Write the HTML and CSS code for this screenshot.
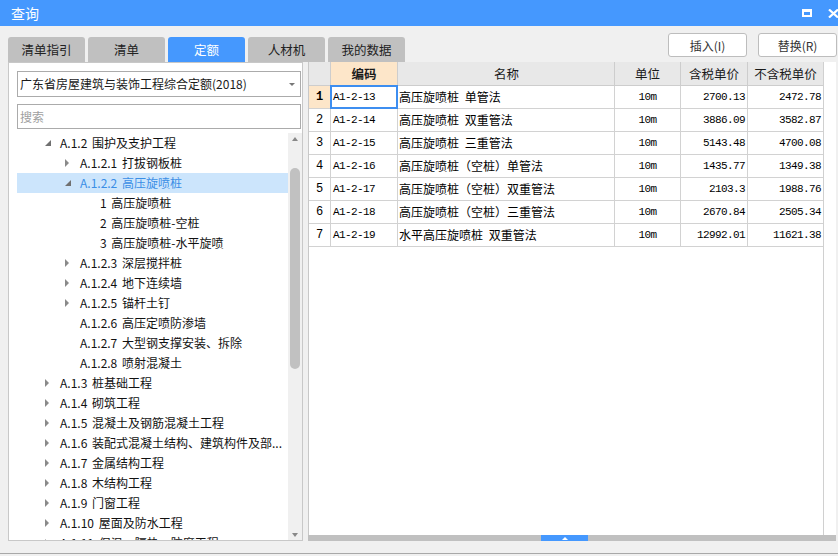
FILE: index.html
```html
<!DOCTYPE html>
<html lang="zh-CN">
<head>
<meta charset="utf-8">
<title>查询</title>
<link rel="stylesheet" href="styles.css">
</head>
<body>
<div class="window">
  <div class="titlebar">
    <span class="title">查询</span>
    <div class="win-ctrls">
      <span class="max-btn"></span>
      <svg class="close-btn" width="11" height="9" viewBox="0 0 11 9"><path d="M1 0.5 L10 8.5 M10 0.5 L1 8.5" stroke="#fff" stroke-width="2.2" fill="none"/></svg>
    </div>
  </div>

  <div class="toolbar">
    <div class="tabs">
      <div class="tab">清单指引</div>
      <div class="tab">清单</div>
      <div class="tab active">定额</div>
      <div class="tab">人材机</div>
      <div class="tab">我的数据</div>
    </div>
    <div class="actions">
      <button class="btn">插入(I)</button>
      <button class="btn">替换(R)</button>
    </div>
  </div>

  <div class="panels">
    <div class="left-panel">
      <div class="select"><span>广东省房屋建筑与装饰工程综合定额(2018)</span><span class="caret"></span></div>
      <div class="search">搜索</div>
      <div class="tree-wrap">
        <div class="tree">
          <div class="row l1"><span class="arrow open"></span>A.1.2 围护及支护工程</div>
          <div class="row l2"><span class="arrow closed"></span>A.1.2.1 打拔钢板桩</div>
          <div class="row l2 selected"><span class="arrow open"></span>A.1.2.2 高压旋喷桩</div>
          <div class="row l3"><span class="arrow"></span>1 高压旋喷桩</div>
          <div class="row l3"><span class="arrow"></span>2 高压旋喷桩-空桩</div>
          <div class="row l3"><span class="arrow"></span>3 高压旋喷桩-水平旋喷</div>
          <div class="row l2"><span class="arrow closed"></span>A.1.2.3 深层搅拌桩</div>
          <div class="row l2"><span class="arrow closed"></span>A.1.2.4 地下连续墙</div>
          <div class="row l2"><span class="arrow closed"></span>A.1.2.5 锚杆土钉</div>
          <div class="row l2"><span class="arrow"></span>A.1.2.6 高压定喷防渗墙</div>
          <div class="row l2"><span class="arrow"></span>A.1.2.7 大型钢支撑安装、拆除</div>
          <div class="row l2"><span class="arrow"></span>A.1.2.8 喷射混凝土</div>
          <div class="row l1"><span class="arrow closed"></span>A.1.3 桩基础工程</div>
          <div class="row l1"><span class="arrow closed"></span>A.1.4 砌筑工程</div>
          <div class="row l1"><span class="arrow closed"></span>A.1.5 混凝土及钢筋混凝土工程</div>
          <div class="row l1"><span class="arrow closed"></span>A.1.6 装配式混凝土结构、建筑构件及部...</div>
          <div class="row l1"><span class="arrow closed"></span>A.1.7 金属结构工程</div>
          <div class="row l1"><span class="arrow closed"></span>A.1.8 木结构工程</div>
          <div class="row l1"><span class="arrow closed"></span>A.1.9 门窗工程</div>
          <div class="row l1"><span class="arrow closed"></span>A.1.10 屋面及防水工程</div>
          <div class="row l1"><span class="arrow closed"></span>A.1.11 保温、隔热、防腐工程</div>
        </div>
        <div class="vscroll">
          <span class="sarrow up"></span>
          <span class="vthumb"></span>
          <span class="sarrow down"></span>
        </div>
      </div>
    </div>

    <div class="right-panel">
      <div class="grid-area">
        <div class="grid">
          <div class="grow head">
            <div class="c rn"></div>
            <div class="c code hl">编码</div>
            <div class="c name">名称</div>
            <div class="c unit">单位</div>
            <div class="c num">含税单价</div>
            <div class="c num last">不含税单价</div>
          </div>
          <div class="grow">
            <div class="c rn cur">1</div>
            <div class="c code sel">A1-2-13</div>
            <div class="c name">高压旋喷桩 单管法</div>
            <div class="c unit">10m</div>
            <div class="c num">2700.13</div>
            <div class="c num last">2472.78</div>
          </div>
          <div class="grow">
            <div class="c rn">2</div>
            <div class="c code">A1-2-14</div>
            <div class="c name">高压旋喷桩 双重管法</div>
            <div class="c unit">10m</div>
            <div class="c num">3886.09</div>
            <div class="c num last">3582.87</div>
          </div>
          <div class="grow">
            <div class="c rn">3</div>
            <div class="c code">A1-2-15</div>
            <div class="c name">高压旋喷桩 三重管法</div>
            <div class="c unit">10m</div>
            <div class="c num">5143.48</div>
            <div class="c num last">4700.08</div>
          </div>
          <div class="grow">
            <div class="c rn">4</div>
            <div class="c code">A1-2-16</div>
            <div class="c name">高压旋喷桩（空桩）单管法</div>
            <div class="c unit">10m</div>
            <div class="c num">1435.77</div>
            <div class="c num last">1349.38</div>
          </div>
          <div class="grow">
            <div class="c rn">5</div>
            <div class="c code">A1-2-17</div>
            <div class="c name">高压旋喷桩（空桩）双重管法</div>
            <div class="c unit">10m</div>
            <div class="c num">2103.3</div>
            <div class="c num last">1988.76</div>
          </div>
          <div class="grow">
            <div class="c rn">6</div>
            <div class="c code">A1-2-18</div>
            <div class="c name">高压旋喷桩（空桩）三重管法</div>
            <div class="c unit">10m</div>
            <div class="c num">2670.84</div>
            <div class="c num last">2505.34</div>
          </div>
          <div class="grow">
            <div class="c rn">7</div>
            <div class="c code">A1-2-19</div>
            <div class="c name">水平高压旋喷桩 双重管法</div>
            <div class="c unit">10m</div>
            <div class="c num">12992.01</div>
            <div class="c num last">11621.38</div>
          </div>
        </div>
        <div class="grid-side"></div>
      </div>
      <div class="hscroll"><div class="hthumb"></div></div>
    </div>
  </div>

  <div class="footer"><div class="footer-line"></div></div>
</div>
</body>
</html>
```

FILE: styles.css
```css
* { box-sizing: border-box; margin: 0; padding: 0; }
html, body { width: 838px; height: 556px; overflow: hidden; }
body {
  background: #f0f0f0;
  font-family: "Noto Sans CJK SC", "Noto Sans", sans-serif;
  color: #1a1a1a;
}
.window { display: flex; flex-direction: column; height: 556px; }

/* title bar */
.titlebar {
  flex: none;
  height: 26px;
  background: #4598fe;
  display: flex;
  align-items: center;
  justify-content: space-between;
  padding-left: 11px;
  overflow: hidden;
}
.title { color: #fff; font-size: 14px; line-height: 26px; }
.win-ctrls { display: flex; align-items: center; gap: 16px; margin-right: -1px; }
.max-btn {
  display: block;
  width: 10px;
  height: 8px;
  border: 2px solid #fff;
  border-top-width: 3px;
}
.close-btn { display: block; }

/* toolbar */
.toolbar {
  flex: none;
  height: 36px;
  display: flex;
  justify-content: space-between;
  padding: 0 1px 0 8px;
}
.tabs { display: flex; gap: 3px; align-self: flex-end; }
.tab {
  width: 77px;
  height: 25px;
  background: #c0c0c0;
  border-radius: 3px 3px 0 0;
  font-size: 12.5px;
  line-height: 25px;
  text-align: center;
  color: #222;
}
.tab.active { background: #4598fe; color: #fff; }
.actions { display: flex; gap: 11px; padding-top: 7px; }
.btn {
  width: 79px;
  height: 24px;
  background: #fff;
  border: 1px solid #bdbdbd;
  border-radius: 3px;
  font-family: "Noto Sans CJK SC", sans-serif;
  font-size: 12px;
  color: #333;
}

/* panels */
.panels {
  flex: none;
  height: 479px;
  display: flex;
  gap: 5px;
  padding: 0 2px 0 8px;
}
.left-panel {
  width: 295px;
  background: #fff;
  border: 1px solid #c8c8c8;
  padding: 8px 1px 0 8px;
  display: flex;
  flex-direction: column;
}
.select {
  flex: none;
  height: 26px;
  border: 1px solid #ababab;
  display: flex;
  align-items: center;
  justify-content: space-between;
  padding: 0 5px 0 2px;
  font-size: 12px;
  line-height: 24px;
  color: #1a1a1a;
}
.caret {
  width: 0; height: 0;
  border-left: 3px solid transparent;
  border-right: 3px solid transparent;
  border-top: 3px solid #777;
}
.search {
  flex: none;
  margin-top: 7px;
  height: 25px;
  border: 1px solid #ababab;
  padding-left: 2px;
  font-size: 12px;
  line-height: 23px;
  color: #a0a0a0;
}
.tree-wrap {
  flex: 1;
  margin-top: 4px;
  margin-right: -1px;
  display: flex;
  overflow: hidden;
  min-height: 0;
}
.tree { flex: 1; overflow: hidden; }
.row {
  height: 20px;
  display: flex;
  align-items: center;
  font-size: 12px;
  line-height: 20px;
  word-spacing: 2px;
  white-space: nowrap;
  color: #111;
}
.row.l1 { padding-left: 27px; }
.row.l2 { padding-left: 47px; }
.row.l3 { padding-left: 67px; }
.row.selected { background: #cce5fc; color: #3a8ee6; }
.arrow {
  flex: none;
  width: 16px;
  height: 20px;
  display: flex;
  align-items: center;
}
.arrow.closed::before {
  content: "";
  margin-left: 1px;
  width: 0; height: 0;
  border-left: 4px solid #8a8a8a;
  border-top: 4px solid transparent;
  border-bottom: 4px solid transparent;
}
.arrow.open::before {
  content: "";
  margin-left: 1px;
  width: 0; height: 0;
  border-bottom: 6px solid #707070;
  border-left: 6px solid transparent;
}
.vscroll {
  flex: none;
  width: 14px;
  background: #f0f0f0;
  display: flex;
  flex-direction: column;
  align-items: center;
}
.sarrow {
  flex: none;
  width: 0; height: 0;
  border-left: 3px solid transparent;
  border-right: 3px solid transparent;
}
.sarrow.up { margin-top: 4px; border-bottom: 4px solid #888; }
.sarrow.down { margin-top: auto; margin-bottom: 3px; border-top: 4px solid #888; }
.vthumb {
  flex: none;
  margin-top: 27px;
  width: 10px;
  height: 201px;
  background: #c1c1c1;
  border-radius: 5px;
}

/* right grid */
.right-panel {
  width: 528px;
  background: #fff;
  display: flex;
  flex-direction: column;
}
.grid-area { flex: 1; display: flex; min-height: 0; }
.grid {
  width: 516px;
  border-left: 1px solid #c8c8c8;
  border-right: 1px solid #d0d0d0;
}
.grid-side { flex: 1; background: #fff; }
.grow {
  display: grid;
  grid-template-columns: 22px 67px 217px 66px 67px 75px;
  height: 23px;
}
.grow.head { height: 24px; background: #e8e8e8; }
.c {
  border-right: 1px solid #d2d2d2;
  border-bottom: 1px solid #d2d2d2;
  font-size: 12px;
  line-height: 22px;
  white-space: nowrap;
  overflow: hidden;
  color: #000;
}
.c.last { border-right: none; }
.head .c {
  font-size: 12.5px;
  line-height: 23px;
  text-align: center;
  color: #1a1a1a;
  border-color: #cdcdcd;
}
.head .c.hl { background: #fde6c9; font-weight: bold; }
.c.rn {
  text-align: center;
  font-family: "Liberation Mono", monospace;
  font-size: 12px;
}
.c.rn.cur { background: #fde6c9; font-weight: bold; }
.c.code {
  padding-left: 2px;
  font-family: "Liberation Mono", monospace;
  font-size: 11px;
  letter-spacing: -0.6px;
}
.c.sel { position: relative; overflow: visible; }
.c.sel::after {
  content: "";
  position: absolute;
  left: -1px; top: -1px; right: -1px; bottom: -1px;
  border: 2px solid #3d8ef0;
}
.c.name { padding-left: 1px; word-spacing: 3px; }
.c.unit {
  text-align: center;
  font-family: "Liberation Mono", monospace;
  font-size: 11px;
  letter-spacing: -0.6px;
}
.c.num {
  text-align: right;
  padding-right: 2px;
  font-family: "Liberation Mono", monospace;
  font-size: 11px;
  letter-spacing: -0.6px;
}
.head .c.num, .head .c.unit { font-family: "Noto Sans CJK SC", sans-serif; letter-spacing: 0; }
.head .c.num { font-size: 12.5px; text-align: center; padding-right: 0; }
.head .c.unit, .head .c.code { font-size: 12.5px; letter-spacing: 0; font-family: "Noto Sans CJK SC", sans-serif; padding-left: 0; }

.hscroll {
  flex: none;
  height: 6px;
  background: #c0c0c0;
  display: flex;
}
.hthumb {
  margin-left: 233px;
  width: 47px;
  height: 6px;
  background: #4598fe;
  display: flex;
  align-items: center;
  justify-content: center;
}
.hthumb::after {
  content: "";
  width: 0; height: 0;
  border-left: 3px solid transparent;
  border-right: 3px solid transparent;
  border-bottom: 3px solid #fff;
}

.footer { flex: 1; }
.footer-line { margin-top: 12px; height: 1px; background: #a8a8a8; }
```
